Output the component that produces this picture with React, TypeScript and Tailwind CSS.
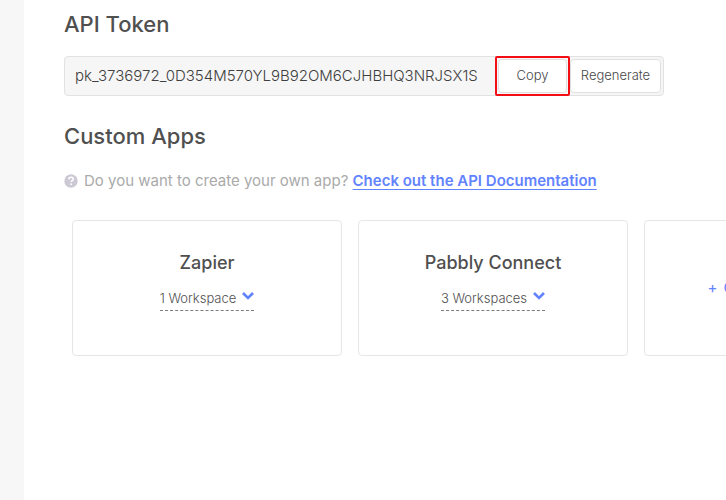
const apps = [
  { name: "Zapier", workspaces: "1 Workspace" },
  { name: "Pabbly Connect", workspaces: "3 Workspaces" },
];

function AppCard({ name, workspaces }: { name: string; workspaces: string }) {
  return (
    <article className="flex h-34 w-[270px] shrink-0 flex-col items-center rounded border border-[#e6e6e6] pt-7">
      <h3 className="text-[18px] leading-7 font-medium text-[#4f4f4f]">{name}</h3>
      <button
        type="button"
        className="mt-3 flex h-[22px] items-center gap-1.5 border-b border-dashed border-[#7c7c7c] pb-1 text-[13px] leading-4 font-light text-[#505050]"
      >
        {workspaces}
        <svg viewBox="0 0 12 8" className="mb-1 h-2 w-3" aria-hidden="true">
          <path d="M1 1l5 5 5-5" fill="none" stroke="#6283ff" strokeWidth="2.6" />
        </svg>
      </button>
    </article>
  );
}

export default function App() {
  return (
    <div className="flex min-h-screen overflow-hidden bg-white font-['Inter',sans-serif]">
      <aside className="w-6 shrink-0 bg-[#f7f7f7]" />
      <main className="min-w-0 flex-1 overflow-hidden pt-2 pl-10">
        <h2 className="text-[22px] leading-8 font-medium text-[#505050]">
          <label htmlFor="token">API Token</label>
        </h2>
        <div className="mt-4 flex h-10 max-w-[600px] items-center rounded border border-[#e2e2e2] bg-[#f6f6f6] pr-0.5 pl-2.5">
          <input
            id="token"
            readOnly
            value="pk_3736972_0D354M570YL9B92OM6CJHBHQ3NRJSX1S"
            className="min-w-0 flex-1 bg-transparent text-[15px] font-light text-[#404040] outline-none"
          />
          <div className="flex h-10 w-[75px] shrink-0 rounded-xs border-2 border-[#f30d15] bg-[#f6f6f6] p-px">
            <button
              type="button"
              className="flex-1 rounded border border-[#e0e0e0] bg-white text-[13px] font-light text-[#484848]"
            >
              Copy
            </button>
          </div>
          <button
            type="button"
            className="h-[34px] w-[91px] shrink-0 rounded border border-[#e0e0e0] bg-white text-[13px] font-light text-[#484848]"
          >
            Regenerate
          </button>
        </div>
        <h2 className="mt-6 text-[22px] leading-8 font-medium text-[#505050]">Custom Apps</h2>
        <p className="mt-4 flex items-center gap-1.5 text-[15px] leading-[26px] whitespace-nowrap text-[#aaaaaa]">
          <svg viewBox="0 0 14 14" className="size-3.5 shrink-0" aria-hidden="true">
            <circle cx="7" cy="7" r="6.7" fill="#cdc9d4" />
            <path d="M4.8 5.4C4.9 4 5.8 3.3 7.1 3.3s2.2.7 2.2 1.8c0 1.6-2.1 1.5-2.1 3" fill="none" stroke="white" strokeWidth="1.5" />
            <circle cx="7.1" cy="10.2" r=".9" fill="white" />
          </svg>
          <span>
            Do you want to create your own app?{" "}
            <a href="#docs" className="font-semibold text-[#6283ff] underline decoration-1 underline-offset-3">
              Check out the API Documentation
            </a>
          </span>
        </p>
        <section className="mt-[26px] flex gap-4 pl-2">
          {apps.map((app) => (
            <AppCard key={app.name} {...app} />
          ))}
          <button
            type="button"
            className="flex h-34 w-[270px] shrink-0 items-center justify-center gap-1.5 rounded border border-[#e6e6e6] text-[15px] whitespace-nowrap text-[#6283ff]"
          >
            <span>+</span>
            <span>Create new App...</span>
          </button>
        </section>
      </main>
    </div>
  );
}
